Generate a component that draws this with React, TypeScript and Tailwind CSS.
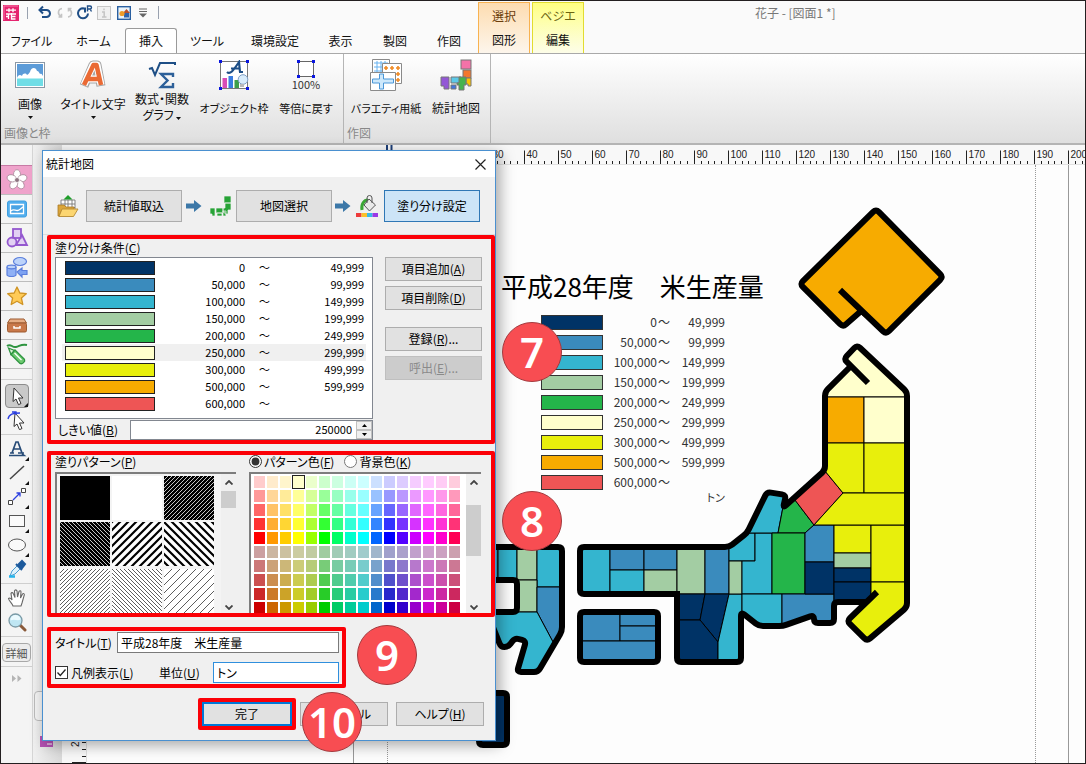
import { useState, type ReactNode } from "react";
import { clsx } from "clsx";

const FONT = "font-['Noto_Sans_CJK_JP','Noto_Sans',sans-serif]";

const ranges = [
  { color: "#003366", from: "0", to: "49,999" },
  { color: "#3a8bbd", from: "50,000", to: "99,999" },
  { color: "#34b5cf", from: "100,000", to: "149,999" },
  { color: "#a3cda3", from: "150,000", to: "199,999" },
  { color: "#24b54a", from: "200,000", to: "249,999" },
  { color: "#ffffcc", from: "250,000", to: "299,999" },
  { color: "#e8ef0c", from: "300,000", to: "499,999" },
  { color: "#f7ab00", from: "500,000", to: "599,999" },
  { color: "#ee5555", from: "600,000", to: "" },
];

const [NAVY, BLUE, CYAN, MINT, GREEN, CREAM, YELLOW, ORANGE, RED] = ranges.map(
  (range) => range.color
);

const brightHues = [
  [255, 0, 0], [255, 153, 0], [255, 204, 0], [255, 255, 0],
  [153, 255, 0], [0, 255, 0], [0, 255, 102], [0, 255, 204],
  [0, 255, 255], [0, 102, 255], [0, 0, 255], [85, 0, 255],
  [204, 0, 255], [255, 0, 255], [255, 0, 204], [255, 0, 85],
];

const darkHues = [
  [204, 0, 0], [204, 102, 0], [204, 153, 0], [204, 204, 0],
  [153, 204, 0], [0, 204, 0], [0, 204, 102], [0, 204, 153],
  [0, 204, 204], [0, 102, 204], [0, 0, 204], [51, 0, 204],
  [153, 0, 204], [204, 0, 204], [204, 0, 153], [204, 0, 68],
];

function tint(hue: number[], max: number, floor: number) {
  const parts = hue.map((c) => Math.round(floor + (c * (max - floor)) / max));
  return `rgb(${parts.join(",")})`;
}

const palette = [
  ...[204, 153, 102, 51, 0].flatMap((f) => brightHues.map((h) => tint(h, 255, f))),
  ...[160, 120, 80, 40, 0].flatMap((f) => darkHues.map((h) => tint(h, 204, f))),
];

/* ---------- ribbon ---------- */

function QuickAccess() {
  return (
    <div className="flex h-[23px] items-center pl-[2px] text-[#1f4e86]">
      <svg className="h-4 w-4" viewBox="0 0 16 16">
        <rect width="16" height="16" fill="#e5246f" />
        <path d="M1 15V1h14" fill="none" stroke="#f47aa9" />
        <path
          d="M3 5.2h10M6 3.2v4M10 3.2v4M3 9h10M5.5 9v5M3 11.5h3M8.5 8v6h4M8.5 11.5h4"
          fill="none"
          stroke="#fff"
          strokeWidth="1.3"
        />
      </svg>
      <span className="ml-2 mr-[9px] h-3 w-px bg-gray-400" />
      <button type="button" aria-label="元に戻す" className="w-5">
        <svg className="h-4 w-4" viewBox="0 0 16 16" fill="none" stroke="currentColor" strokeWidth="2">
          <path d="M6 1.5L2.5 5 6 8.5M3 5h6.5a3.4 3.4 0 010 7H5" />
        </svg>
      </button>
      <button type="button" aria-label="やり直し" className="w-5 text-[#c4c4c4]">
        <svg className="h-4 w-4" viewBox="0 0 16 16" fill="none" stroke="currentColor" strokeWidth="1.6">
          <path d="M5 3.5C1 4 0 9 4 11.5M1.5 12h3V8.8M11 12c4-.5 5-5.5 1-8M14.5 3.5h-3v3" />
        </svg>
      </button>
      <button type="button" aria-label="繰り返し" className="w-5">
        <svg className="h-4 w-4" viewBox="0 0 16 16" fill="none" stroke="currentColor">
          <path d="M6.5 3.3A5 5 0 1011 8.5M4 3.4h4v4" strokeWidth="2" />
          <path d="M10.5 6.5V1h2.5a1.5 1.5 0 010 3h-2.5M13 4l1.5 2.5" strokeWidth="1.4" />
        </svg>
      </button>
      <button type="button" aria-label="情報" className="w-5">
        <svg className="h-[14px] w-[14px]" viewBox="0 0 14 14">
          <rect x=".5" y=".5" width="13" height="13" fill="#f0f0f0" stroke="#c6c6c6" />
          <path d="M5 6h2.2v5M5 11h4.5M7 2.5v1.8" fill="none" stroke="#c4c4c4" strokeWidth="1.5" />
        </svg>
      </button>
      <button type="button" aria-label="部品" className="w-5">
        <svg className="h-[14px] w-[14px]" viewBox="0 0 14 14">
          <rect x=".7" y=".7" width="12.6" height="12.6" fill="#e9f3fb" stroke="#2a5fa0" strokeWidth="1.4" />
          <rect x="7" y="7" width="5" height="4.5" fill="#2c62ac" />
          <path d="M6 7l3.5-4L13 7z" fill="#b8502a" />
          <circle cx="5" cy="7.5" r="2.6" fill="#ee9c28" />
        </svg>
      </button>
      <button type="button" aria-label="カスタマイズ" className="w-5">
        <svg className="h-3 w-3" viewBox="0 0 12 12">
          <path d="M2 2h8M2 4.5h8" stroke="#666" />
          <path d="M2 6.5h8L6 10.5z" fill="#666" />
        </svg>
      </button>
      <span className="ml-px h-[13px] w-px bg-gray-400" />
    </div>
  );
}

function MenuTab({ label, width, active }: { label: string; width: string; active?: boolean }) {
  return (
    <button
      type="button"
      className={clsx(
        "h-full whitespace-nowrap text-center",
        width,
        active && "relative -mb-px rounded-t-[3px] border border-b-0 border-[#9a9a9a] bg-white pb-px"
      )}
    >
      {label}
    </button>
  );
}

function RibbonItem({
  icon,
  label,
  width,
  arrow,
  tall = true,
  small,
}: {
  icon: ReactNode;
  label: ReactNode;
  width: string;
  arrow?: boolean;
  tall?: boolean;
  small?: boolean;
}) {
  return (
    <button type="button" className={clsx("flex flex-col items-center pt-[5px]", width)}>
      <span className="flex h-8 items-center">{icon}</span>
      <span
        className={clsx(
          "whitespace-nowrap leading-4",
          small && "text-[11px]",
          tall && !arrow && "mt-[9px]",
          arrow && "mt-[5px]"
        )}
      >
        {label}
      </span>
      {arrow && <DownArrow />}
    </button>
  );
}

function DownArrow() {
  return (
    <svg className="mt-1 inline-block h-[3px] w-[5px]" viewBox="0 0 5 3">
      <path d="M0 0h5L2.5 3z" fill="#111" />
    </svg>
  );
}

function PictureIcon() {
  return (
    <svg className="h-[26px] w-[30px]" viewBox="0 0 30 26">
      <rect x=".5" y=".5" width="29" height="25" fill="#fff" stroke="#8a97a5" />
      <rect x="2" y="2" width="26" height="14" fill="#5b9bd8" />
      <path d="M2 16c1-3 3-4 5-2 1-3 4-3 5-1 2-1 2-2 3-3 1-5 6-5 7-1 2 0 2 2 3 3 2-1 2 1 3 2v2z" fill="#fff" />
      <rect x="2" y="16.5" width="26" height="7.5" fill="#6fdde6" />
    </svg>
  );
}

function LetterIcon() {
  return (
    <svg className="h-[30px] w-7" viewBox="0 0 28 30" strokeLinejoin="round">
      <path d="M5 26L14 5h4l4 21M9 19h11" fill="none" stroke="#a4a4a4" strokeWidth="9" />
      <path d="M5 25L14 5h4l4 20M9 19h11" fill="none" stroke="#fff" strokeWidth="7" />
      <path d="M5 25L14.500 5h3L22 25M9 19h11" fill="none" stroke="#ea6a34" strokeWidth="4.5" />
    </svg>
  );
}

function SigmaIcon() {
  return (
    <svg className="h-7 w-7" viewBox="0 0 28 28" fill="none">
      <path d="M1 8l3-1 3 7 5-12h15v2" stroke="#1e4f86" strokeWidth="2" />
      <path d="M25 16v-3H13l6.5 6.5L13 26h12v-4" stroke="#2d6099" strokeWidth="2.4" />
    </svg>
  );
}

function ObjectFrameIcon() {
  return (
    <svg className="h-[30px] w-[30px]" viewBox="0 0 30 30">
      <rect x="1.5" y="1.5" width="27" height="27" fill="#fff" stroke="#777" />
      <path d="M8 12c3 3 6-1 12-10l1 10M12 8.5h9M20 12h4" fill="none" stroke="#1d4e86" strokeWidth="2.2" />
      <rect x="3.5" y="18" width="4.5" height="10" fill="#d94cb6" />
      <rect x="9.5" y="16" width="4.5" height="12" fill="#3a7de0" />
      <rect x="15.5" y="20" width="4.5" height="8" fill="#3d9e4a" />
      <circle cx="24" cy="19.5" r="4.8" fill="#d8ecfb" stroke="#7e9ec4" />
      <path d="M21 24h4v3h-4z" fill="#b9b9b9" />
      <path d="M0 0h3v3H0zM27 0h3v3h-3zM0 27h3v3H0zM27 27h3v3h-3z" fill="#0a16e0" />
    </svg>
  );
}

function FullSizeIcon() {
  return (
    <span className="flex flex-col items-center">
      <svg className="h-[18px] w-[18px]" viewBox="0 0 18 18">
        <rect x="1.5" y="1.5" width="15" height="15" fill="#fff" stroke="#666" />
        <path d="M0 0h3v3H0zM15 0h3v3h-3zM0 15h3v3H0zM15 15h3v3h-3z" fill="#0a16e0" />
      </svg>
      <span className="text-[11px] leading-[13px] text-[#333]">100%</span>
    </span>
  );
}

function PaperIcon() {
  return (
    <svg className="h-8 w-8" viewBox="0 0 32 32" fill="none">
      <path d="M2.5.5h17v14h-17z" fill="#fff" stroke="#8a8a8a" />
      <path d="M4 4h14M4 8h14M4 12h14M7 2v12M11 2v12M15 2v12" stroke="#67b2f0" />
      <path d="M12.5 4.5h19v20h-19z" fill="#fff" stroke="#8a8a8a" />
      <path d="M14 9h4M16 7v4M20 9h4M22 7v4M26 9h4M28 7v4M26 15h4M28 13v4M26 21h4M28 19v4" stroke="#f08a24" strokeWidth="1.6" />
      <path d="M.5 13.5h25v18H.5z" fill="#fff" stroke="#8a8a8a" />
      <path d="M9.5 15h4v5h10v4h-10v6h-4v-6h-7v-4h7z" fill="#cde8fb" stroke="#4a97d8" />
    </svg>
  );
}

function StatMapIcon() {
  return (
    <svg className="h-8 w-8" viewBox="0 0 32 32" stroke="#777" strokeWidth="1">
      <rect x="21" y="1" width="10" height="9" fill="#f472a8" />
      <rect x="23" y="11" width="8" height="8" fill="#f4772c" />
      <path d="M26 19h5v8h-3v-2h-2z" fill="#fbc400" />
      <path d="M1 18h8v12H4v-3H1z" fill="#9357d6" />
      <path d="M11 18h10v6H11z" fill="#5cc9e8" />
      <path d="M19 18h7v8h-2v5h-5v-5h-2v-2h2z" fill="#47b34d" />
      <path d="M11 26h5v4h-5z" fill="#4376dd" />
    </svg>
  );
}

function Ribbon() {
  return (
    <header className="shrink-0 border-b-2 border-[#b4b4b4]">
      <div className="flex h-[53px] border-b border-[#a9a9a9] bg-[#fafafa]">
        <div className="flex w-[477px] shrink-0 flex-col justify-between">
          <QuickAccess />
          <nav className="flex h-[25px]">
            <MenuTab label="ファイル" width="w-[61px]" />
            <MenuTab label="ホーム" width="w-[63px]" />
            <MenuTab label="挿入" width="w-[52px]" active />
            <MenuTab label="ツール" width="w-[60px]" />
            <MenuTab label="環境設定" width="w-[76px]" />
            <MenuTab label="表示" width="w-[55px]" />
            <MenuTab label="製図" width="w-[54px]" />
            <MenuTab label="作図" width="w-[54px]" />
          </nav>
        </div>
        <div className="mt-px flex w-[52px] shrink-0 flex-col justify-between border border-b-0 border-[#f8b250] bg-linear-to-b from-[#fddcb0] to-[#fdf6ec]">
          <span className="pt-[3px] text-center leading-5 text-[#6b3d0c]">選択</span>
          <MenuTab label="図形" width="w-full h-[25px]" />
        </div>
        <div className="ml-[2px] mt-px flex w-[52px] shrink-0 flex-col justify-between border border-b-0 border-[#e2dc30] bg-linear-to-b from-[#ffff80] to-[#fdfde8]">
          <span className="pt-[3px] text-center leading-5 text-[#6b6310]">ベジエ</span>
          <MenuTab label="編集" width="w-full h-[25px]" />
        </div>
        <h1 className="flex-1 pl-[171px] pt-[2px] leading-5 text-[#777] [font-feature-settings:normal]">
          花子 - [図面1 *]
        </h1>
      </div>
      <div className="flex h-[89px] bg-linear-to-b from-white to-[#dfdfdf]">
        <section className="flex w-[343px] shrink-0 flex-col justify-between border-r border-[#b5b5b5]">
          <div className="flex">
            <RibbonItem icon={<PictureIcon />} label="画像" width="w-[58px]" arrow />
            <RibbonItem icon={<LetterIcon />} label="タイトル文字" width="w-[68px]" arrow />
            <RibbonItem
              icon={<SigmaIcon />}
              tall={false}
              width="w-[70px]"
              label={
                <>
                  数式・関数
                  <br />
                  グラフ <DownArrow />
                </>
              }
            />
            <RibbonItem icon={<ObjectFrameIcon />} label="オブジェクト枠" width="w-[74px]" small />
            <RibbonItem icon={<FullSizeIcon />} label="等倍に戻す" width="w-[70px]" small />
          </div>
          <p className="pl-[3px] leading-5 text-[#888]">画像と枠</p>
        </section>
        <section className="flex w-[147px] shrink-0 flex-col justify-between border-r border-[#b5b5b5]">
          <div className="flex pl-1">
            <RibbonItem icon={<PaperIcon />} label="バラエティ用紙" width="w-[76px]" small />
            <RibbonItem icon={<StatMapIcon />} label="統計地図" width="w-[64px]" />
          </div>
          <p className="pl-[3px] leading-5 text-[#888]">作図</p>
        </section>
      </div>
    </header>
  );
}

/* ---------- left toolbar ---------- */

const categories: { name: string; icon: ReactNode }[] = [
  {
    name: "花",
    icon: (
      <g fill="#fff" stroke="#a88a99" strokeWidth=".8">
        <ellipse cx="12" cy="6.5" rx="3.5" ry="4.8" />
        <ellipse cx="12" cy="6.5" rx="3.5" ry="4.8" transform="rotate(72 12 12)" />
        <ellipse cx="12" cy="6.5" rx="3.5" ry="4.8" transform="rotate(144 12 12)" />
        <ellipse cx="12" cy="6.5" rx="3.5" ry="4.8" transform="rotate(216 12 12)" />
        <ellipse cx="12" cy="6.5" rx="3.5" ry="4.8" transform="rotate(288 12 12)" />
        <circle cx="12" cy="12" r="2.5" fill="#8d7480" stroke="#fff" />
      </g>
    ),
  },
  {
    name: "図",
    icon: (
      <g fill="none" stroke="#3f9fe0">
        <rect x="2.5" y="4" width="19" height="16" rx="2" fill="#52aeee" />
        <path d="M5.500 7.500h13v9h-13z" fill="#4aa3e4" stroke="#fff" strokeWidth="1.3" />
        <path d="M6 14c3-3 5 1 8-1s3-3 5-3" stroke="#fff" strokeWidth="1.3" />
      </g>
    ),
  },
  {
    name: "図形",
    icon: (
      <g fill="#d5b9f2" fillOpacity=".6" stroke="#9458cf" strokeWidth="1.8">
        <rect x="8" y="3" width="8" height="9" />
        <path d="M17 9l5 10H11z" />
        <circle cx="7" cy="16" r="4.5" />
      </g>
    ),
  },
  {
    name: "部品",
    icon: (
      <g fill="#bcd3fa" stroke="#5b7fdc" strokeWidth="1.2">
        <ellipse cx="15" cy="6.5" rx="6.5" ry="4" />
        <path d="M2 12v8c1 2 8 2 9 0v-8c-1 2-8 2-9 0z" fill="#8fb0f5" />
        <ellipse cx="6.5" cy="12" rx="4.5" ry="1.8" />
        <path d="M12 17l5-4v2.500h5v4h-5V22z" fill="#7da2f2" />
      </g>
    ),
  },
  {
    name: "お気に入り",
    icon: (
      <path
        d="M12 3l2.800 6 6.500.7-4.900 4.300 1.400 6.500L12 17.200l-5.800 3.300L7.600 14 2.700 9.700 9.200 9z"
        fill="#ffcb57"
        stroke="#cf9426"
        strokeWidth="1.3"
        strokeLinejoin="round"
      />
    ),
  },
  {
    name: "引き出し",
    icon: (
      <g stroke="#9d5b30">
        <path d="M5 6h14l2.500 4h-19z" fill="#e6ad84" />
        <rect x="2.5" y="10" width="19" height="9" rx="1.5" fill="#c9794a" />
        <path d="M9 13v2h6v-2" fill="none" stroke="#fff" strokeWidth="1.5" />
      </g>
    ),
  },
  {
    name: "ペン",
    icon: (
      <g stroke="#2e9440" strokeWidth="1.3">
        <path d="M2 4c4-3 5 2 9 1s5-3 11-2" fill="none" strokeWidth="2" />
        <path d="M3.500 6l6 2.500-3.500 4z" fill="#d9f2d5" />
        <path d="M10 8l9.500 9.500c1 2-2 5-4.500 4L6 12.500z" fill="#6cc96f" />
        <path d="M9.500 11l7 7" stroke="#fff" />
      </g>
    ),
  },
];

const cursorPath = "M7 2l9 10h-4.500l2.500 5.500-2.500 1.200L9 13l-3 2.500z";

const tools: { name: string; icon: ReactNode; active?: boolean; corner?: boolean; end?: boolean }[] = [
  { name: "選択", active: true, corner: true, icon: <path d={cursorPath} fill="#fff" stroke="#333" /> },
  {
    name: "編集",
    end: true,
    icon: (
      <>
        <path d={cursorPath} fill="#fff" stroke="#333" transform="translate(1 1)" />
        <path d="M1 9c1-5 5-6 12-6M5 2h4v3" fill="none" stroke="#2b3fe0" strokeWidth="1.3" />
      </>
    ),
  },
  {
    name: "文字",
    corner: true,
    icon: (
      <path d="M3 14h4M5 14l4-11h2l4 11M7 10h6M11 14h6M2 16.500h15l-2-1.500" fill="none" stroke="#274b77" strokeWidth="1.7" />
    ),
  },
  { name: "直線", corner: true, icon: <path d="M3 16L17 3" stroke="#444" strokeWidth="1.5" /> },
  {
    name: "連結線",
    corner: true,
    icon: (
      <>
        <path d="M1.500 13.500h4v4h-4zM14.500 1.500h4v4h-4z" fill="#fff" stroke="#444" />
        <path d="M6 13l7-7M9.500 6H13v3.500" fill="none" stroke="#2b3fe0" strokeWidth="1.3" />
      </>
    ),
  },
  { name: "四角形", corner: true, icon: <rect x="2.5" y="4.5" width="15" height="11" fill="#fafafa" stroke="#555" /> },
  { name: "楕円", corner: true, icon: <ellipse cx="10" cy="10" rx="8.5" ry="6" fill="#fafafa" stroke="#555" /> },
  {
    name: "スポイト",
    end: true,
    icon: (
      <>
        <path d="M3 17l2-5 6-6 3 3-6 6z" fill="#dff2fc" stroke="#4a9bd0" />
        <path d="M9 5l6 6M12 5l3-3 3 3-3 4z" fill="#1d5a9c" stroke="#1d5a9c" strokeWidth="2" />
        <path d="M2 17.500h6" stroke="#26b3ea" strokeWidth="2.5" />
      </>
    ),
  },
  {
    name: "手のひら",
    icon: (
      <path
        d="M6 18c-1-3-4-5-4.500-7.500 1-1 2.500 0 3.500 1.500L4 5.500C4.500 4 6 4.500 6.500 6L8 9.500 7.500 3c.5-1.500 2-1.500 2.500 0l.5 6L12 3.500c.7-1.200 2-1 2 .5L13.500 10l2-4c.8-1 2-.3 1.800 1L15 15l-1 3z"
        fill="#fff"
        stroke="#666"
        strokeWidth="1.1"
      />
    ),
  },
  {
    name: "ズーム",
    end: true,
    icon: (
      <>
        <path d="M13 13l5 5" stroke="#8a5a3a" strokeWidth="3" strokeLinecap="round" />
        <circle cx="8.5" cy="8.5" r="6.5" fill="#bfe6f3" stroke="#7b9aa6" strokeWidth="1.3" />
        <path d="M3.500 8.500a5 5 0 0110-1c-3 2-6-1-10 1z" fill="#ecfafe" />
      </>
    ),
  },
];

function Toolbar() {
  return (
    <aside className="flex w-8 shrink-0 flex-col border-r border-[#d5d5d5] bg-[#f4f4f4] pt-5">
      {categories.map((item, index) => (
        <button
          key={item.name}
          type="button"
          aria-label={item.name}
          className={clsx(
            "flex h-[29px] items-center justify-center border-t",
            index === 0 ? "border-[#c77aa5] bg-[#efa3cb]" : "border-[#bdbdbd]"
          )}
        >
          <svg className="h-6 w-6" viewBox="0 0 24 24">
            {item.icon}
          </svg>
        </button>
      ))}
      <span className="mb-1 h-3 border-y border-[#d0d0d0] border-t-[#bdbdbd]" />
      {tools.map((tool) => (
        <div
          key={tool.name}
          className={clsx("flex justify-center", tool.end && "mb-[2px] border-b border-[#cfcfcf] pb-[2px]")}
        >
          <button
            type="button"
            aria-label={tool.name}
            className={clsx(
              "relative flex h-6 w-6 items-center justify-center",
              tool.active && "rounded-sm border border-[#8c8c8c] bg-[#c9c9c9]"
            )}
          >
            <svg className="h-5 w-5" viewBox="0 0 20 20">
              {tool.icon}
            </svg>
            {tool.corner && (
              <svg className="absolute bottom-0 right-0 h-1 w-1" viewBox="0 0 4 4">
                <path d="M4 0v4H0z" fill="#111" />
              </svg>
            )}
          </button>
        </div>
      ))}
      <button
        type="button"
        className="mx-px mt-1 h-[19px] rounded-sm border border-[#a8a8a8] bg-[#ececec] text-[11px] leading-4 text-[#555]"
      >
        詳細
      </button>
      <span className="mt-1 h-px bg-[#cfcfcf]" />
      <svg className="mx-auto mt-2 h-[7px] w-[10px]" viewBox="0 0 10 7">
        <path d="M0 0l4 3.500L0 7zM5.500 0l4 3.500-4 3.500z" fill="#b4b4b4" />
      </svg>
    </aside>
  );
}

/* ---------- drawing area ---------- */

function Ruler() {
  const marks = Array.from({ length: 21 }, (_, i) => i);

  return (
    <svg className="block h-5 w-full border-b border-[#e2e2e2] bg-[#f8f8f8] text-[10px]">
      {marks.map((mark) => {
        const x = 326.5 + mark * 34;
        return (
          <g key={mark} stroke="#222">
            <path d={`M${x} 5.500v14`} />
            <path d={`M${x + 7} 16v3.500M${x + 14} 16v3.500M${x + 20} 16v3.500M${x + 27} 16v3.500`} />
            <text x={x + 2} y="12.5" stroke="none" fill="#222" fontFamily="Liberation Sans">
              {mark * 10}
            </text>
          </g>
        );
      })}
      <path d="M325 0v5M329.500 0v5" stroke="#1d3f78" strokeWidth="2" />
    </svg>
  );
}

const regions: [string, string][] = [
  // Kyushu
  [CYAN, "480,547 498,547 498,580 480,580"],
  [CYAN, "498,547 517,547 517,580 498,580"],
  [MINT, "517,547 537,547 537,580 517,580"],
  [CYAN, "537,547 562,547 562,587 537,587"],
  [MINT, "517,580 537,580 537,612 517,612"],
  [BLUE, "537,587 562,587 562,630 553,642 537,612"],
  [CYAN, "480,612 537,612 553,642 538,672 518,671 526,641 515,638 508,647 501,647 490,627"],
  // Chugoku and Kinki
  [CYAN, "580,547 610,547 610,594 580,594"],
  [BLUE, "610,547 644,547 644,570 610,570"],
  [CYAN, "610,570 644,570 644,594 610,594"],
  [BLUE, "644,547 677,547 677,570 644,570"],
  [MINT, "644,570 677,570 677,594 644,594"],
  [MINT, "677,547 705,547 705,594 677,594"],
  [BLUE, "705,547 729,547 729,594 705,594"],
  [NAVY, "677,594 705,594 700,620 677,620"],
  [NAVY, "705,594 729,594 718,642 700,620"],
  [NAVY, "677,620 700,620 718,642 718,662 677,662"],
  [CYAN, "729,594 742,594 742,662 718,662 718,642"],
  // Shikoku
  [BLUE, "580,612 620,612 620,641 580,641"],
  [BLUE, "620,612 658,612 658,626 620,626"],
  [BLUE, "620,626 658,626 658,641 620,641"],
  [BLUE, "580,641 658,641 658,662 580,662"],
  // Chubu
  [CYAN, "729,547 747,533 755,533 755,561 729,561"],
  [MINT, "729,561 742,561 742,594 729,594"],
  [CYAN, "755,533 772,533 772,594 742,594 742,561 755,561"],
  [CYAN, "748,533 767,492 786,495 783,507 778,533"],
  [GREEN, "783,507 795,500 814,525 805,533 778,533"],
  [GREEN, "772,533 805,533 805,594 772,594"],
  [CYAN, "742,594 782,594 782,626 762,626 742,612"],
  [BLUE, "782,594 834,594 834,623 814,623 814,615 782,626"],
  [RED, "825,471 843,493 814,525 795,500"],
  // Kanto
  [BLUE, "814,525 834,525 834,562 805,562 805,533"],
  [NAVY, "805,562 834,562 834,594 805,594"],
  [YELLOW, "834,525 871,525 871,553 834,553"],
  [MINT, "834,553 871,553 871,568 834,568"],
  [NAVY, "834,568 871,568 871,582 834,582"],
  [NAVY, "834,582 871,582 871,602 834,602"],
  [YELLOW, "871,525 907,525 907,582 871,582"],
  [YELLOW, "871,582 907,582 907,602 902,612 867,640 847,621 871,600"],
  // Tohoku
  [CREAM, "825,397 825,392 850,366 844,359 857,345 907,392 907,397"],
  [ORANGE, "825,397 864,397 864,443 825,443"],
  [CREAM, "864,397 907,397 907,443 864,443"],
  [YELLOW, "825,443 864,443 864,493 843,493 825,471"],
  [YELLOW, "864,443 907,443 907,493 864,493"],
  [YELLOW, "843,493 907,493 907,525 814,525"],
  // Hokkaido
  [ORANGE, "876,209 942,277 886,334 860,313 843,327 800,284"],
  // Okinawa
  [NAVY, "479,693 506,693 506,745 479,745"],
];

type Point = [number, number];

const coasts: { points: Point[]; closed?: boolean }[] = [
  {
    points: [
      [480, 547], [562, 547], [562, 631], [538, 672], [517, 672], [526, 641],
      [515, 638], [508, 647], [501, 647], [490, 620],
    ],
  },
  { points: [[480, 580], [517, 580], [517, 612], [480, 612]] },
  {
    points: [
      [677, 594], [580, 594], [580, 547], [729, 547], [747, 533], [767, 492],
      [786, 495], [783, 508], [825, 470], [825, 392], [851, 366],
    ],
  },
  {
    points: [
      [868, 383], [844, 359], [857, 345], [907, 392], [907, 607], [867, 641],
      [847, 621], [877, 592],
    ],
  },
  {
    points: [
      [677, 591], [677, 662], [741, 662], [741, 612], [759, 626], [783, 626],
      [814, 615], [814, 623], [834, 623], [834, 602], [866, 602],
    ],
  },
  { points: [[580, 612], [658, 612], [658, 662], [580, 662]], closed: true },
  { points: [[840, 290], [886, 334], [943, 277], [876, 209], [800, 284], [843, 327], [860, 312]] },
  { points: [[479, 693], [507, 693], [507, 745], [479, 745]], closed: true },
];

// Trims each corner of the outline and joins the two sides with a small curve.
function roundedPath(points: Point[], closed = false, radius = 4) {
  const count = points.length;
  const toward = (a: Point, b: Point) => {
    const length = Math.hypot(b[0] - a[0], b[1] - a[1]);
    const t = Math.min(radius, length / 2) / length;
    return `${a[0] + (b[0] - a[0]) * t} ${a[1] + (b[1] - a[1]) * t}`;
  };
  const steps = points.map((point, i) => {
    if (!closed && (i === 0 || i === count - 1)) {
      return `${i === 0 ? "M" : "L"}${point.join(" ")}`;
    }
    const prev = points[(i + count - 1) % count];
    const next = points[(i + 1) % count];
    return `${i === 0 ? "M" : "L"}${toward(point, prev)}Q${point.join(" ")} ${toward(point, next)}`;
  });
  return steps.join("") + (closed ? "z" : "");
}

function JapanMap() {
  return (
    <svg
      className="absolute left-[383px] top-[35px] h-[550px] w-[480px]"
      viewBox="470 200 480 550"
      role="img"
      aria-label="都道府県別の米生産量"
    >
      {regions.map(([fill, points]) => (
        <polygon key={points} points={points} fill={fill} stroke="#000" />
      ))}
      {coasts.map(({ points, closed }, index) => (
        <path
          key={index}
          d={roundedPath(points, closed)}
          fill="none"
          stroke="#000"
          strokeWidth="6"
          strokeLinejoin="round"
        />
      ))}
    </svg>
  );
}

function Legend() {
  return (
    <table className="absolute left-[454px] top-[147px] text-right text-[#333]">
      <tbody>
        {ranges.map((range) => (
          <tr key={range.from} className="h-5">
            <td className="p-0">
              <div className="h-[15px] w-[62px] border border-[#333]" style={{ backgroundColor: range.color }} />
            </td>
            <td className="w-[54px] p-0 leading-5">{range.from}</td>
            <td className="w-[13px] p-0 leading-5">～</td>
            <td className="w-[55px] p-0 leading-5">{range.to}</td>
          </tr>
        ))}
        <tr>
          <td colSpan={4} className="p-0 text-[11px] leading-[10px]">
            トン
          </td>
        </tr>
      </tbody>
    </table>
  );
}

function Canvas() {
  return (
    <div className="flex min-w-0 flex-1 flex-col">
      <Ruler />
      <div className="flex flex-1">
        <svg className="h-auto w-[25px] shrink-0 border-r border-[#e0e0e0] bg-[#f8f8f8] text-[10px]" aria-hidden="true">
          <path d="M20 577.500h4M20 584.500h4M20 591.500h4M10 597.500h14" stroke="#222" />
          <text x="0" y="0" fill="#222" fontFamily="Liberation Sans" transform="translate(17 582) rotate(-90)">
            2
          </text>
        </svg>
        <div className="relative flex-1 overflow-hidden bg-[#fdfdfd]">
          <div className="absolute inset-y-0 left-[266px] border-l border-[#999]" />
          <div className="absolute inset-y-0 left-[300px] border-l border-dotted border-[#999]" />
          <div className="absolute inset-y-0 left-[948px] border-l border-dotted border-[#999]" />
          <div className="absolute inset-y-0 left-[981px] border-l border-[#999]" />
          <h2 className="absolute left-[414px] top-[101px] whitespace-pre text-[26px] leading-10 text-black [font-feature-settings:normal]">
            平成28年度　米生産量
          </h2>
          <Legend />
          <JapanMap />
        </div>
      </div>
    </div>
  );
}

/* ---------- dialog ---------- */

function Label({ text, accessKey, htmlFor }: { text: string; accessKey: string; htmlFor?: string }) {
  const content = (
    <>
      {text}(<u>{accessKey}</u>)
    </>
  );
  if (!htmlFor) return <span className="whitespace-nowrap">{content}</span>;
  return (
    <label htmlFor={htmlFor} className="whitespace-nowrap">
      {content}
    </label>
  );
}

function PushButton({
  children,
  className,
  disabled,
}: {
  children: ReactNode;
  className?: string;
  disabled?: boolean;
}) {
  return (
    <button
      type="button"
      disabled={disabled}
      className={clsx(
        "shrink-0 whitespace-nowrap border",
        disabled ? "border-[#bfbfbf] bg-[#cccccc] text-[#8a8a8a]" : "border-[#adadad] bg-[#e1e1e1]",
        className
      )}
    >
      {children}
    </button>
  );
}

function StepArrow() {
  return (
    <svg className="h-4 w-4 shrink-0" viewBox="0 0 16 16">
      <path d="M0 5.500h8V2l7.500 6L8 14v-3.500H0z" fill="#3c78a8" />
    </svg>
  );
}

function Steps() {
  return (
    <div className="flex h-[58px] items-center border-b border-[#dcdcdc] pl-[14px]">
      <svg className="mr-[7px] h-[22px] w-[22px] shrink-0" viewBox="0 0 22 22">
        <path d="M4 5h14v11H4zM4 9h14M4 12.500h14M8 5v11M11 5v11M15 5v11" fill="#fff" stroke="#777" strokeWidth=".9" />
        <path d="M11 0l4.500 4.500h-9z" fill="#1e9e2a" />
        <path d="M1 10h6l2 2h8v3H5l-3 6H1z" fill="#dba53a" stroke="#a87a28" strokeWidth=".8" />
        <path d="M5 14h16l-4.500 7.500H2z" fill="#fcd671" stroke="#b58a32" strokeWidth=".9" />
      </svg>
      <PushButton className="h-8 w-24">統計値取込</PushButton>
      <span className="mx-1 flex">
        <StepArrow />
      </span>
      <svg className="mx-1 h-[22px] w-[22px] shrink-0" viewBox="0 0 22 22" fill="#27a336" stroke="#f0f0f0" strokeWidth=".7">
        <path d="M14 1h7v7h-7zM15 8h6v7h-3v4h-3v-2h-2v-4h2zM0 13h5v8H2v-2H0zM6 13h7v5H6zM7 18h5v3H7zM13 16h3v5h-3z" />
      </svg>
      <PushButton className="h-8 w-24">地図選択</PushButton>
      <span className="mx-[3px] flex">
        <StepArrow />
      </span>
      <svg className="ml-[2px] mr-[6px] h-[22px] w-[22px] shrink-0" viewBox="0 0 22 22">
        <path d="M6 15C5 9 8 5 12 5" fill="none" stroke="#3ba636" strokeWidth="3" />
        <path d="M13 4l6.500 6-6 6L8 10z" fill="#e9e9e9" stroke="#555" />
        <path d="M11 8V3a2.500 2.500 0 015 0v5" fill="none" stroke="#555" />
        <path d="M0 18h5.500v4H0z" fill="#ee3b3b" />
        <path d="M5.500 18h5.500v4H5.500z" fill="#fbc02b" />
        <path d="M11 18h5.500v4H11z" fill="#39b9e6" />
        <path d="M16.500 18H22v4h-5.500z" fill="#9a39e6" />
      </svg>
      <PushButton className="h-8 w-24 border-[#2f77b5]! bg-[#cce4f7]!">塗り分け設定</PushButton>
    </div>
  );
}

function Frame({ children, className }: { children: ReactNode; className?: string }) {
  return <section className={clsx("rounded-[2px] border-4 border-[#fb0007]", className)}>{children}</section>;
}

function Conditions() {
  return (
    <Frame className="ml-1 flex pl-1">
      <div className="w-[318px] shrink-0">
        <div className="leading-[18px]">
          <Label text="塗り分け条件" accessKey="C" />
        </div>
        <div className="h-[162px] border border-[#828790] bg-white px-[6px] pt-px">
          <table className="w-full text-right text-[11px]">
            <tbody>
              {ranges.map((range) => (
                <tr key={range.from} className={clsx("h-[17px]", range.color === CREAM && "bg-[#f0f0f0]")}>
                  <td className="p-0 pl-[3px]">
                    <div className="h-[14px] w-[90px] border border-[#222]" style={{ backgroundColor: range.color }} />
                  </td>
                  <td className="w-[90px] p-0 leading-[17px]">{range.from}</td>
                  <td className="w-[25px] p-0 leading-[17px]">～</td>
                  <td className="w-[96px] p-0 pr-[2px] leading-[17px]">{range.to}</td>
                </tr>
              ))}
            </tbody>
          </table>
        </div>
        <div className="flex h-[21px] items-center pl-[3px]">
          <span className="w-[72px]">
            <Label text="しきい値" accessKey="B" htmlFor="threshold" />
          </span>
          <div className="flex h-5 flex-1 border border-[#828790] bg-white">
            <input
              id="threshold"
              inputMode="numeric"
              defaultValue="250000"
              className="min-w-0 flex-1 pr-1 text-right text-[11px] outline-none"
            />
            <div className="flex w-4 flex-col bg-[#f0f0f0]">
              <button type="button" aria-label="増やす" className="flex flex-1 items-center justify-center border border-[#c0c0c0]">
                <svg className="h-[3px] w-[5px]" viewBox="0 0 5 3">
                  <path d="M0 3h5L2.500 0z" />
                </svg>
              </button>
              <button type="button" aria-label="減らす" className="flex flex-1 items-center justify-center border border-[#c0c0c0]">
                <svg className="h-[3px] w-[5px]" viewBox="0 0 5 3">
                  <path d="M0 0h5L2.500 3z" />
                </svg>
              </button>
            </div>
          </div>
        </div>
      </div>
      <div className="ml-3 flex flex-col gap-[5px] pt-[18px]">
        <PushButton className="h-6 w-[97px]">
          <Label text="項目追加" accessKey="A" />
        </PushButton>
        <PushButton className="h-6 w-[97px]">
          <Label text="項目削除" accessKey="D" />
        </PushButton>
        <PushButton className="mt-3 h-6 w-[97px]">
          <Label text="登録" accessKey="R" />
          ...
        </PushButton>
        <PushButton className="h-6 w-[97px]" disabled>
          <Label text="呼出" accessKey="E" />
          ...
        </PushButton>
      </div>
    </Frame>
  );
}

function Scrollbar({ thumb }: { thumb: string }) {
  return (
    <div className="flex h-full w-[15px] flex-col bg-[#f0f0f0]">
      <button type="button" aria-label="上へ" className="flex h-[17px] shrink-0 items-center justify-center">
        <svg className="h-[5px] w-2" viewBox="0 0 8 5" fill="none" stroke="#444" strokeWidth="1.8">
          <path d="M.5 4.500L4 1l3.500 3.500" />
        </svg>
      </button>
      <div className="flex-1">
        <div className={clsx("bg-[#cdcdcd]", thumb)} />
      </div>
      <button type="button" aria-label="下へ" className="flex h-3 shrink-0 items-center justify-center">
        <svg className="h-[5px] w-2" viewBox="0 0 8 5" fill="none" stroke="#444" strokeWidth="1.8">
          <path d="M.5.500L4 4 7.500.500" />
        </svg>
      </button>
    </div>
  );
}

type Hatch = { size: number; width: number; color: string; back: string; flip?: boolean };

const hatches: (Hatch | string)[] = [
  "#000",
  "#fff",
  { size: 4, width: 0.9, color: "#ddd", back: "#000" },
  { size: 4, width: 0.9, color: "#ddd", back: "#000", flip: true },
  { size: 8, width: 2.2, color: "#000", back: "#fff" },
  { size: 8, width: 2.2, color: "#000", back: "#fff", flip: true },
  { size: 4, width: 0.8, color: "#333", back: "#fff" },
  { size: 4, width: 0.8, color: "#333", back: "#fff", flip: true },
  { size: 8, width: 0.8, color: "#333", back: "#fff" },
];

function HatchCell({ hatch, id }: { hatch: Hatch | string; id: string }) {
  if (typeof hatch === "string") {
    return <button type="button" aria-label={id} className="h-11 w-[50px]" style={{ backgroundColor: hatch }} />;
  }
  const { size, width, color, back, flip } = hatch;
  const lines = `M-2 2L2-2M0 ${size}L${size} 0M${size - 2} ${size + 2}L${size + 2} ${size - 2}`;

  return (
    <button type="button" aria-label={id} className="h-11 w-[50px]">
      <svg className="block h-11 w-[50px]">
        <defs>
          <pattern
            id={id}
            width={size}
            height={size}
            patternUnits="userSpaceOnUse"
            patternTransform={flip ? "scale(-1 1)" : undefined}
          >
            <rect width={size} height={size} fill={back} />
            <path d={lines} stroke={color} strokeWidth={width} />
          </pattern>
        </defs>
        <rect width="50" height="44" fill={`url(#${id})`} />
      </svg>
    </button>
  );
}

function Patterns() {
  const [target, setTarget] = useState("pattern");
  const [selected, setSelected] = useState(3);

  return (
    <Frame className="ml-1 mt-[7px] flex h-[166px] overflow-hidden pl-1">
      <div className="w-[181px] shrink-0">
        <div className="h-[17px] leading-[14px]">
          <Label text="塗りパターン" accessKey="P" />
        </div>
        <div className="flex h-[141px] justify-between border-l-2 border-t-2 border-[#7d7d7d] bg-[#f4f4f4]">
          <div className="grid grid-cols-3 gap-[2px] pl-[3px] pt-[2px]">
            {hatches.map((hatch, index) => (
              <HatchCell key={index} hatch={hatch} id={`hatch-${index}`} />
            ))}
          </div>
          <Scrollbar thumb="h-[17px]" />
        </div>
      </div>
      <div className="ml-[13px] w-[232px] shrink-0">
        <div className="flex h-[17px] items-start gap-[2px] leading-[14px]">
          <input
            type="radio"
            id="pattern-color"
            name="target"
            className="m-0 h-[13px] w-[13px] accent-[#333]"
            checked={target === "pattern"}
            onChange={() => setTarget("pattern")}
          />
          <Label text="パターン色" accessKey="F" htmlFor="pattern-color" />
          <input
            type="radio"
            id="back-color"
            name="target"
            className="m-0 ml-2 h-[13px] w-[13px] accent-[#333]"
            checked={target === "back"}
            onChange={() => setTarget("back")}
          />
          <Label text="背景色" accessKey="K" htmlFor="back-color" />
        </div>
        <div className="flex h-[141px] justify-between border-l-2 border-t-2 border-[#7d7d7d] bg-white">
          <div className="grid grid-cols-[repeat(16,11px)] content-start gap-[2px] pl-[3px] pt-[2px]">
            {palette.map((color, index) => (
              <button
                key={index}
                type="button"
                aria-label={color}
                onClick={() => setSelected(index)}
                className={clsx("h-3 w-[11px]", index === selected && "outline outline-[#222]")}
                style={{ backgroundColor: color }}
              />
            ))}
          </div>
          <Scrollbar thumb="mt-[14px] h-[51px]" />
        </div>
      </div>
    </Frame>
  );
}

function LegendOptions() {
  return (
    <Frame className="ml-1 mt-[10px] flex h-[61px] w-[299px] flex-col justify-between py-px pl-1 pr-[3px]">
      <div className="flex items-center">
        <span className="w-[62px]">
          <Label text="タイトル" accessKey="T" htmlFor="title" />
        </span>
        <input
          id="title"
          defaultValue="平成28年度　米生産量"
          className="h-[21px] min-w-0 flex-1 border border-[#7a7a7a] bg-white px-[3px] outline-none"
        />
      </div>
      <div className="flex items-center">
        <span className="relative mr-[3px] flex h-[13px] w-[13px]">
          <input
            id="show-legend"
            type="checkbox"
            defaultChecked
            className="peer h-[13px] w-[13px] appearance-none border border-[#333] bg-white"
          />
          <svg className="pointer-events-none absolute inset-0 hidden peer-checked:block" viewBox="0 0 13 13" fill="none" stroke="#222" strokeWidth="1.3">
            <path d="M2.500 6.500l2.800 3 5.200-6" />
          </svg>
        </span>
        <span className="w-[88px]">
          <Label text="凡例表示" accessKey="L" htmlFor="show-legend" />
        </span>
        <span className="w-[54px]">
          <Label text="単位" accessKey="U" htmlFor="unit" />
        </span>
        <input
          id="unit"
          defaultValue="トン"
          className="h-[21px] min-w-0 flex-1 border border-[#2f8fdd] bg-white px-[3px] outline-none"
        />
      </div>
    </Frame>
  );
}

function StatMapDialog() {
  return (
    <div
      role="dialog"
      aria-label="統計地図"
      className="absolute left-[41px] top-[149px] w-[454px] border border-[#4a90d0] bg-[#f0f0f0] pb-[10px] text-black shadow-[4px_4px_14px_rgba(0,0,0,0.35)]"
    >
      <div className="flex h-[26px] items-center justify-between bg-white pl-[3px] pr-[9px]">
        <h2>統計地図</h2>
        <button type="button" aria-label="閉じる">
          <svg className="h-[11px] w-[11px]" viewBox="0 0 11 11" stroke="#222" strokeWidth="1.2">
            <path d="M.5.500l10 10M10.500.500l-10 10" />
          </svg>
        </button>
      </div>
      <Steps />
      <Conditions />
      <Patterns />
      <LegendOptions />
      <div className="mt-[10px] flex items-center pl-[155px]">
        <Frame className="w-[98px]">
          <button type="button" className="block h-6 w-full border-2 border-[#0078d7] bg-[#e1e1e1] leading-5">
            完了
          </button>
        </Frame>
        <PushButton className="ml-1 h-6 w-[88px]">キャンセル</PushButton>
        <PushButton className="ml-2 h-6 w-[88px]">
          <Label text="ヘルプ" accessKey="H" />
        </PushButton>
      </div>
    </div>
  );
}

function Badge({ value, className }: { value: number; className: string }) {
  return (
    <span
      className={clsx(
        "absolute flex h-[60px] w-[60px] items-center justify-center rounded-full border border-[#a33a3e] bg-[#f84d52] font-['Noto_Sans',sans-serif] text-[42px] font-semibold leading-none text-white",
        className
      )}
    >
      {value}
    </span>
  );
}

export default function App() {
  return (
    <div
      className={clsx(
        "relative flex min-h-screen flex-col overflow-hidden border border-[#231f20] bg-white text-xs text-[#111] [font-feature-settings:'palt']",
        FONT
      )}
    >
      <Ribbon />
      <div className="flex flex-1">
        <Toolbar />
        <div className="flex w-[29px] shrink-0 flex-col justify-end bg-linear-to-r from-[#f0f0f0] to-[#dadada]">
          <span className="ml-[1px] h-[30px] rounded-l border border-[#bbb] bg-[#f2f2f2]" />
          <svg className="mb-[16px] ml-[7px] mt-[15px] h-[11px] w-[13px]" viewBox="0 0 13 11">
            <rect width="13" height="11" fill="#b752b4" />
            <path d="M2 2h4M2 4.500h2M7 8h5" stroke="#fff" />
          </svg>
        </div>
        <Canvas />
      </div>
      <StatMapDialog />
      <Badge value={7} className="left-[501px] top-[321px]" />
      <Badge value={8} className="left-[501px] top-[490px]" />
      <Badge value={9} className="left-[356px] top-[624px]" />
      <Badge value={10} className="left-[301px] top-[691px]" />
    </div>
  );
}
